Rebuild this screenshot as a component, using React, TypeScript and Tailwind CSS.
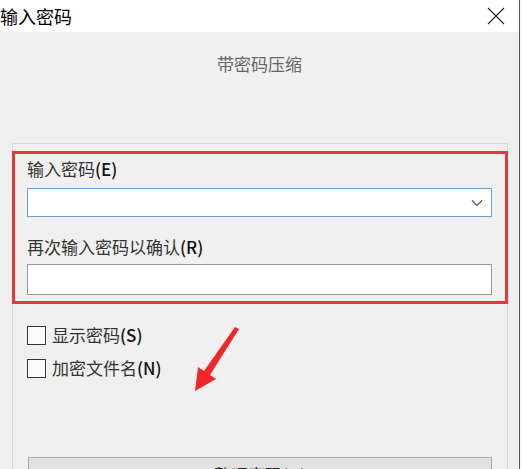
import React from 'react';

const font = { fontFamily: '"Noto Sans CJK SC", "Noto Sans", sans-serif' };

function Label({ text, hotkey }: { text: string; hotkey: string }) {
  return (
    <span className="text-[17px] leading-[22px] text-[#333]">
      {text}
      <span className="text-[#111] font-medium">({hotkey})</span>
    </span>
  );
}

function Checkbox({ text, hotkey }: { text: string; hotkey: string }) {
  return (
    <label className="flex items-center gap-[6px] h-[20px]">
      <span className="w-[19px] h-[19px] border border-[#333] bg-[#fbfbfb] shrink-0" />
      <Label text={text} hotkey={hotkey} />
    </label>
  );
}

export default function App() {
  return (
    <div className="relative w-[522px] h-[469px] overflow-hidden flex bg-white" style={font}>
      {/* dialog window */}
      <div className="w-[520px] h-full flex flex-col border-r border-[#555]">
        {/* title bar */}
        <div className="h-[32px] bg-white flex items-center justify-between shrink-0">
          <span className="text-[18px] leading-[24px] text-black -mt-[1px]">输入密码</span>
          <svg className="mr-[14px]" width="18" height="18" viewBox="0 0 18 18">
            <path d="M1 1 L17 17 M17 1 L1 17" stroke="#222" strokeWidth="1.1" fill="none" />
          </svg>
        </div>

        {/* body */}
        <div className="flex-1 bg-[#f0f0f0] flex flex-col">
          <div className="h-[111px] flex justify-center pt-[21px] shrink-0">
            <span className="text-[17px] leading-[22px] text-[#666]">带密码压缩</span>
          </div>

          <div className="flex-1 ml-[12px] mr-[11px] border-t border-l border-r border-[#dadada] pt-[7px]">
            {/* password fields */}
            <div className="border-[3px] border-[#e5383e] h-[153px] pl-[12px] pt-[4px] -ml-[1px] -mr-[1px]">
              <div className="h-[22px] leading-[22px]">
                <Label text="输入密码" hotkey="E" />
              </div>
              <div className="mt-[8px] w-[465px] h-[29px] bg-white border border-[#6a9fd6] flex items-center justify-end pr-[8px]">
                <svg width="12" height="8" viewBox="0 0 12 8">
                  <path d="M1 1.5 L6 6.5 L11 1.5" stroke="#555" strokeWidth="1.2" fill="none" />
                </svg>
              </div>
              <div className="mt-[19px] h-[22px] leading-[22px]">
                <Label text="再次输入密码以确认" hotkey="R" />
              </div>
              <div className="mt-[6px] w-[465px] h-[31px] bg-white border border-[#9a9a9a]" />
            </div>

            <div className="pl-[14px] pt-[21px] flex flex-col gap-[13px]">
              <Checkbox text="显示密码" hotkey="S" />
              <Checkbox text="加密文件名" hotkey="N" />
            </div>

            <div className="ml-[15px] mt-[79px] w-[464px] h-[30px] bg-[#e1e1e1] border border-[#adadad] flex justify-center pt-[7px]">
              <span className="text-[17px] leading-[20px] text-[#222]">整理密码(O)</span>
            </div>
          </div>
        </div>
      </div>
      <div className="w-[1px] h-full bg-[#f4f4f4]" />

      {/* red pointer arrow */}
      <svg className="absolute left-0 top-0 pointer-events-none" width="522" height="469" viewBox="0 0 522 469">
        <polygon points="235,327 239,329 210,375 216,379 195,391 198,367 204,371" fill="#f0262b" />
      </svg>
    </div>
  );
}
